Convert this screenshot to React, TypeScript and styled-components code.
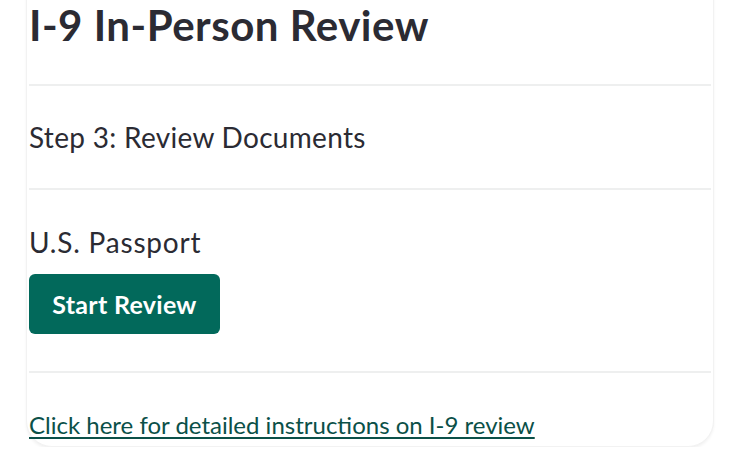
import React from 'react';
import styled, { createGlobalStyle } from 'styled-components';

const GlobalStyle = createGlobalStyle`
    html, body {
        margin: 0;
        padding: 0;
        background: #ffffff;
        font-family: 'Lato', 'Noto Sans', sans-serif;
        color: #2b2b33;
    }
`;

const Card = styled.div`
    width: 688px;
    box-sizing: border-box;
    margin: -32px 0 0 26px;
    padding: 0 2px;
    background: #fff;
    border: 1px solid #f2f2f2;
    border-radius: 26px;
    box-shadow: 0 2px 3px rgba(0, 0, 0, 0.05);
`;

const Section = styled.div<{ $pt: number; $pb: number; $last?: boolean }>`
    padding: ${p => p.$pt}px 0 ${p => p.$pb}px 0;
    border-bottom: ${p => (p.$last ? 'none' : '2px solid #eeefef')};
`;

const Title = styled.h1`
    margin: 0;
    font-size: 42px;
    font-weight: 700;
    line-height: 52px;
    letter-spacing: 0.5px;
    color: #2b2b33;
`;

const StepTitle = styled.h2`
    margin: 0;
    font-size: 28px;
    font-weight: 400;
    line-height: 32px;
    letter-spacing: 0.3px;
    color: #2b2b33;
`;

const DocName = styled.h3`
    margin: 0 0 16px 0;
    font-size: 28px;
    font-weight: 400;
    line-height: 32px;
    letter-spacing: 0.8px;
    color: #2b2b33;
`;

const ReviewButton = styled.button`
    display: flex;
    align-items: center;
    justify-content: center;
    width: 191px;
    height: 60px;
    border: none;
    border-radius: 6px;
    background: #02695b;
    color: #fff;
    font-family: inherit;
    font-size: 25px;
    font-weight: 700;
    letter-spacing: 0.3px;
    cursor: pointer;
`;

const HelpLink = styled.a`
    font-size: 24px;
    color: #0b5048;
    text-decoration: underline;
    text-decoration-thickness: 2px;
    text-underline-offset: 3px;
    cursor: pointer;
`;

const App = (): JSX.Element => {
    return (
        <>
            <GlobalStyle />
            <Card>
                <Section $pt={30} $pb={33}>
                    <Title>I-9 In-Person Review</Title>
                </Section>
                <Section $pt={35} $pb={35}>
                    <StepTitle>Step 3: Review Documents</StepTitle>
                </Section>
                <Section $pt={36} $pb={37}>
                    <DocName>U.S. Passport</DocName>
                    <ReviewButton>Start Review</ReviewButton>
                </Section>
                <Section $pt={37} $pb={7} $last>
                    <HelpLink>Click here for detailed instructions on I-9 review</HelpLink>
                </Section>
            </Card>
        </>
    );
};

export default App;
